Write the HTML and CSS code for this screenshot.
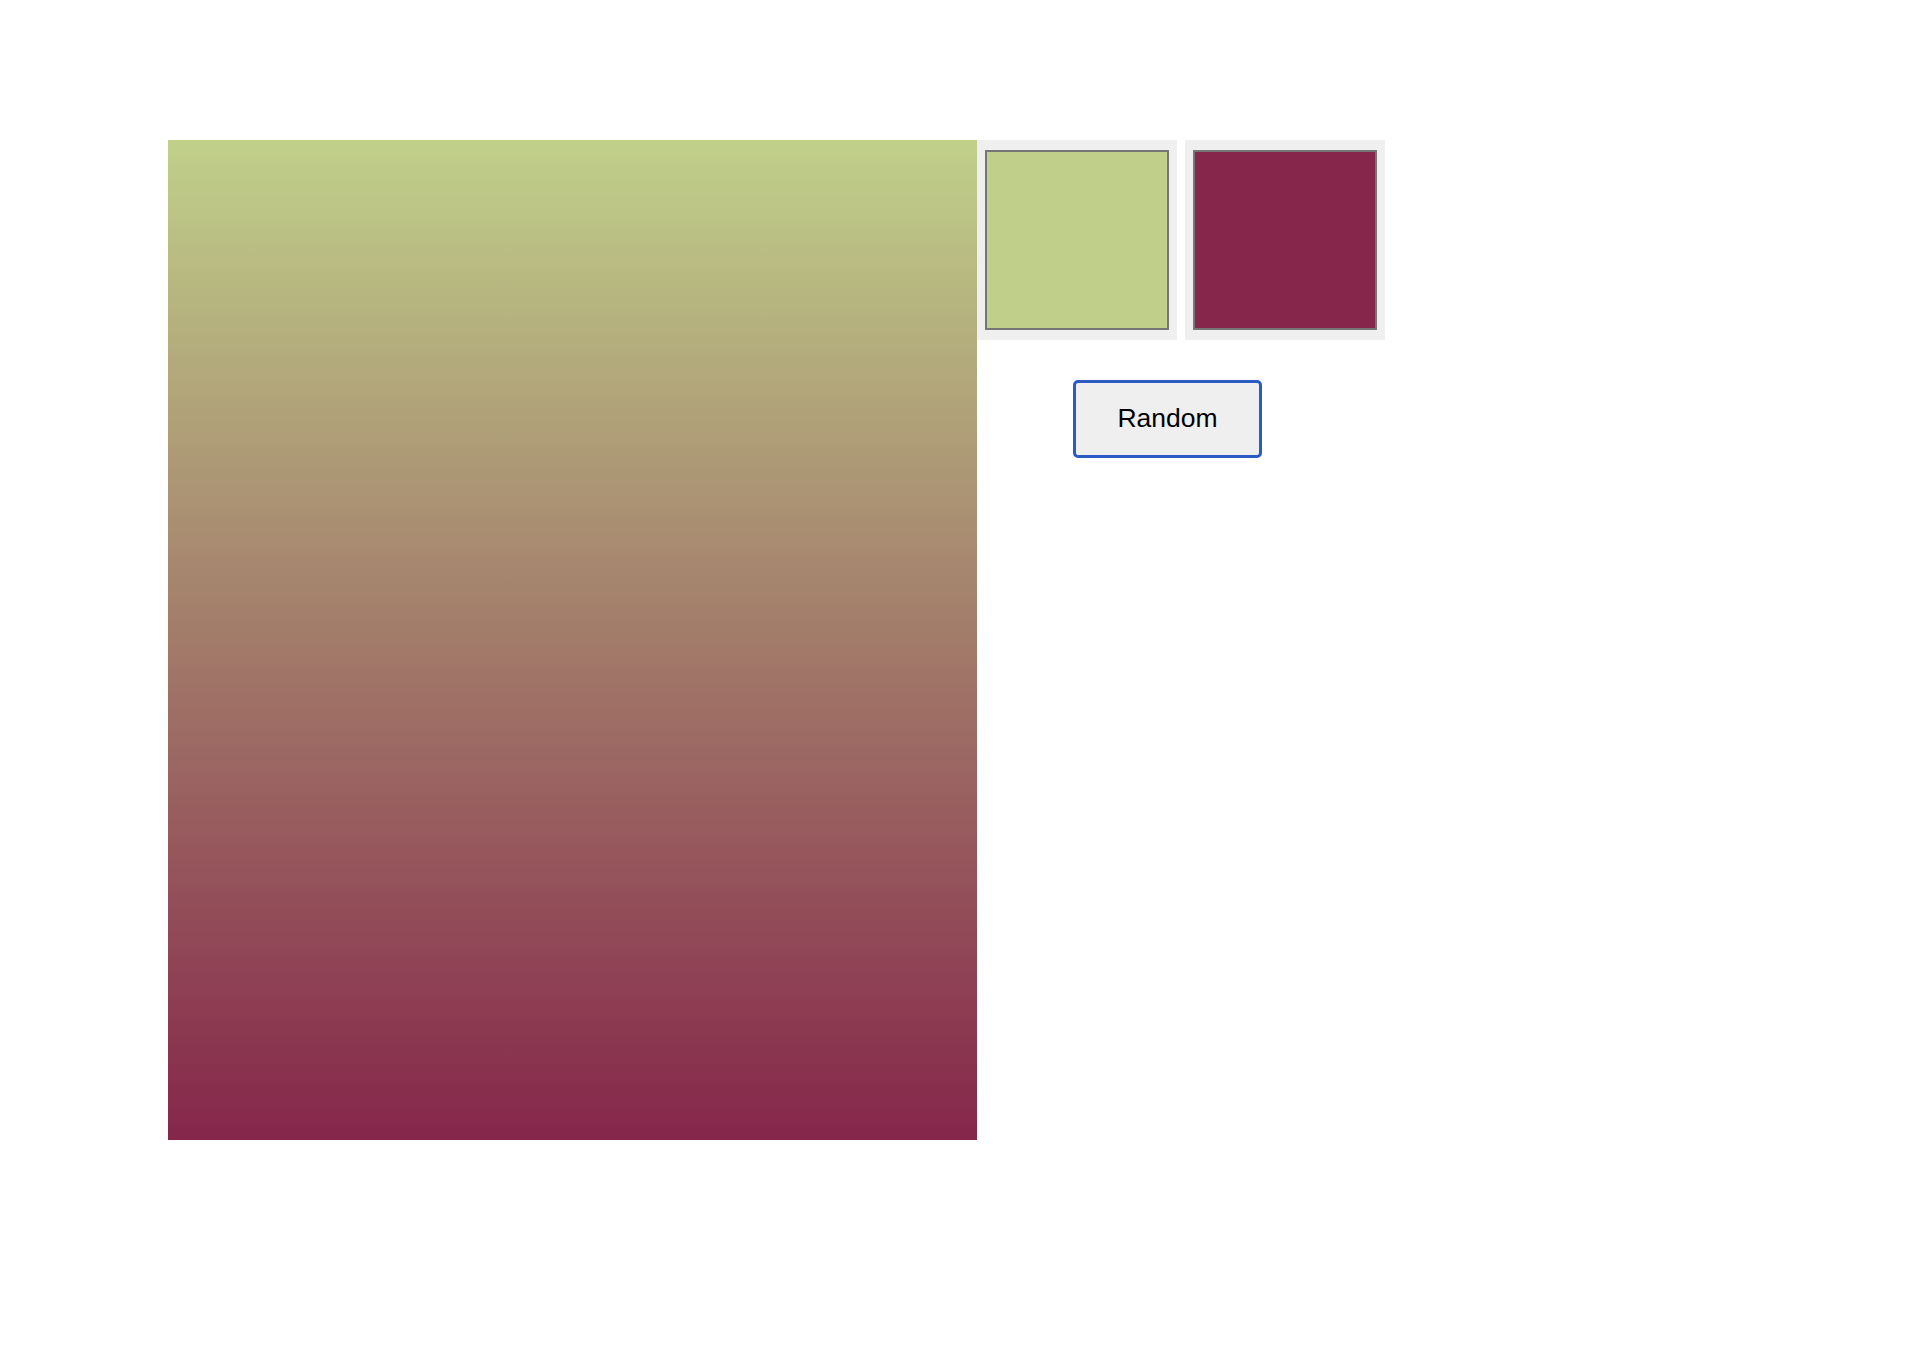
FILE: index.html
```html
<!DOCTYPE html>
<html>
<head>
<meta charset="utf-8">
<link rel="stylesheet" href="styles.css">
</head>
<body>
<div class="page">
  <div class="gradient"></div>
  <div class="side">
    <div class="swatches">
      <div class="picker"><div class="swatch swatch-a"></div></div>
      <div class="picker"><div class="swatch swatch-b"></div></div>
    </div>
    <button class="random">Random</button>
  </div>
</div>
</body>
</html>
```
FILE: styles.css
```css
html, body {
  margin: 0;
  padding: 0;
  background: #ffffff;
}
.page {
  display: flex;
  align-items: flex-start;
  padding: 140px 0 0 168px;
}
.gradient {
  width: 809px;
  height: 1000px;
  background: linear-gradient(to bottom, #c0d08a, #85264a);
  flex: none;
}
.side {
  display: flex;
  flex-direction: column;
  align-items: flex-start;
}
.swatches {
  display: flex;
  gap: 8px;
}
.picker {
  width: 200px;
  height: 200px;
  box-sizing: border-box;
  background: #efefef;
  padding: 10px 8px;
}
.swatch {
  width: 100%;
  height: 100%;
  box-sizing: border-box;
  border: 2px solid #767676;
}
.swatch-a { background: #c0d08a; }
.swatch-b { background: #85264a; }
.random {
  margin: 40px 0 0 96px;
  width: 189px;
  height: 78px;
  box-sizing: border-box;
  background: #efefef;
  border: 3px solid #2b5cc6;
  border-radius: 5px;
  font-family: "Liberation Sans", Arial, sans-serif;
  font-size: 26.5px;
  color: #000;
  padding: 0 0 1px 0;
}
```
